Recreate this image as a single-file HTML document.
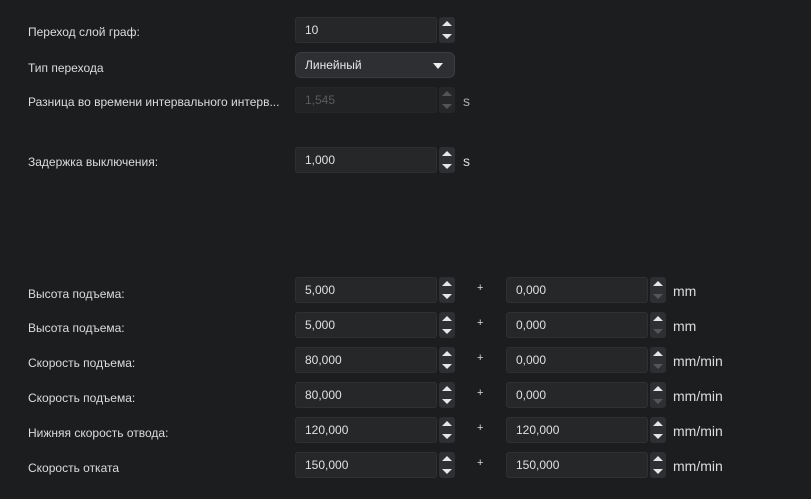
<!DOCTYPE html>
<html><head><meta charset="utf-8"><style>
body{margin:0;width:811px;height:499px;background:#1c1d1f;font-family:"Liberation Sans","DejaVu Sans",sans-serif;font-size:12px;color:#dcdcdc;position:relative;overflow:hidden}
.l{position:absolute;left:28px;line-height:14px}
.in{position:absolute;width:142px;height:26px;background:#262729;border:1px solid #2f3033;box-sizing:border-box;border-radius:3px;padding-left:9px;line-height:24px;color:#e0e0e0}
.sp{position:absolute;width:16px;height:26px;background:#2e2f33;border-radius:3px}
.sp:before{content:"";position:absolute;left:3px;top:4px;border-left:5px solid transparent;border-right:5px solid transparent;border-bottom:5px solid #e6e6e6}
.sp:after{content:"";position:absolute;left:3px;bottom:4px;border-left:5px solid transparent;border-right:5px solid transparent;border-top:5px solid #e6e6e6}
.sp.dd:after{border-top-color:#555}
.sp.dis:before{border-bottom-color:#555}.sp.dis:after{border-top-color:#555}
.u{position:absolute;font-size:14px;color:#dcdcdc}
.p{position:absolute;left:477px;font-size:11px;color:#ddd}
</style></head><body>
<div class="l" style="top:25px">Переход слой граф:</div>
<div class="in" style="left:295px;top:17px">10</div><div class="sp" style="left:439px;top:17px"></div>
<div class="l" style="top:61px">Тип перехода</div>
<div style="position:absolute;left:295px;top:52px;width:160px;height:26px;background:#2e2f32;border:1px solid #3a3b3e;box-sizing:border-box;border-radius:6px;padding-left:9px;line-height:24px;color:#e6e6e6">Линейный<span style="position:absolute;right:11px;top:10px;border-left:5px solid transparent;border-right:5px solid transparent;border-top:6px solid #eee"></span></div>
<div class="l" style="top:95px">Разница во времени интервального интерв...</div>
<div class="in" style="left:295px;top:87px;color:#5a5b5e;background:#222325;border-color:#262729">1,545</div><div class="sp dis" style="left:439px;top:87px;background:#262729"></div><div class="u" style="left:463px;top:93px;color:#aaa">s</div>
<div class="l" style="top:155px">Задержка выключения:</div>
<div class="in" style="left:295px;top:147px">1,000</div><div class="sp" style="left:439px;top:147px"></div><div class="u" style="left:463px;top:153px">s</div>

<div class="l" style="top:287px">Высота подъема:</div>
<div class="in" style="left:295px;top:277px">5,000</div><div class="sp" style="left:439px;top:277px"></div><div class="p" style="top:282px">+</div>
<div class="in" style="left:506px;top:277px">0,000</div><div class="sp dd" style="left:650px;top:277px"></div><div class="u" style="left:673px;top:283px">mm</div>

<div class="l" style="top:321px">Высота подъема:</div>
<div class="in" style="left:295px;top:312px">5,000</div><div class="sp" style="left:439px;top:312px"></div><div class="p" style="top:317px">+</div>
<div class="in" style="left:506px;top:312px">0,000</div><div class="sp dd" style="left:650px;top:312px"></div><div class="u" style="left:673px;top:318px">mm</div>

<div class="l" style="top:356px">Скорость подъема:</div>
<div class="in" style="left:295px;top:347px">80,000</div><div class="sp" style="left:439px;top:347px"></div><div class="p" style="top:352px">+</div>
<div class="in" style="left:506px;top:347px">0,000</div><div class="sp dd" style="left:650px;top:347px"></div><div class="u" style="left:673px;top:353px">mm/min</div>

<div class="l" style="top:391px">Скорость подъема:</div>
<div class="in" style="left:295px;top:382px">80,000</div><div class="sp" style="left:439px;top:382px"></div><div class="p" style="top:387px">+</div>
<div class="in" style="left:506px;top:382px">0,000</div><div class="sp dd" style="left:650px;top:382px"></div><div class="u" style="left:673px;top:388px">mm/min</div>

<div class="l" style="top:426px">Нижняя скорость отвода:</div>
<div class="in" style="left:295px;top:417px">120,000</div><div class="sp" style="left:439px;top:417px"></div><div class="p" style="top:422px">+</div>
<div class="in" style="left:506px;top:417px">120,000</div><div class="sp" style="left:650px;top:417px"></div><div class="u" style="left:673px;top:423px">mm/min</div>

<div class="l" style="top:461px">Скорость отката</div>
<div class="in" style="left:295px;top:452px">150,000</div><div class="sp" style="left:439px;top:452px"></div><div class="p" style="top:457px">+</div>
<div class="in" style="left:506px;top:452px">150,000</div><div class="sp" style="left:650px;top:452px"></div><div class="u" style="left:673px;top:458px">mm/min</div>
</body></html>
